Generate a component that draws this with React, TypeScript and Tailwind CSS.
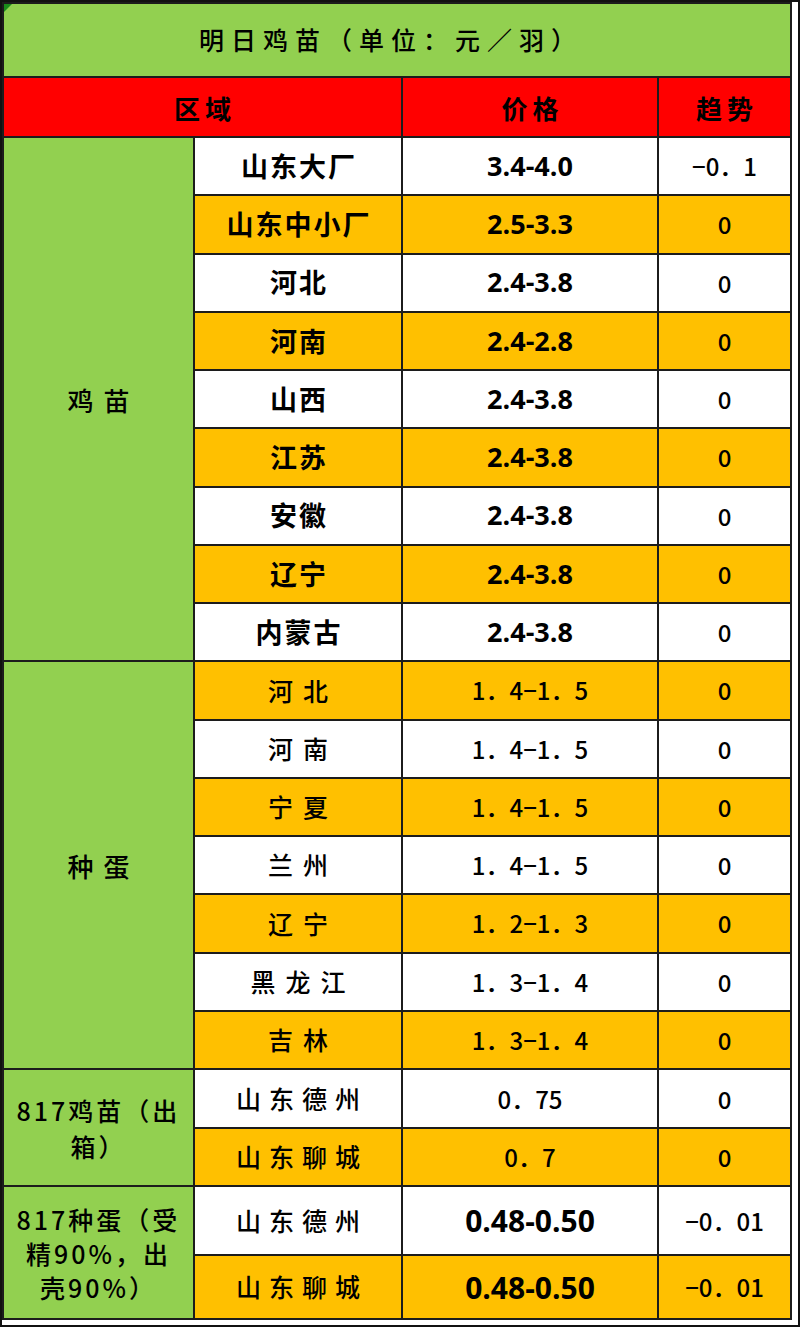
import { Fragment } from "react"

const cjk = "font-['Noto_Sans_CJK_SC',sans-serif] font-medium"
const latinBold = "font-['Open_Sans','Noto_Sans_CJK_SC',sans-serif] font-bold"

type Row = {
  name: string
  price: string
  trend: string
  alt: boolean
}

type Section = {
  label: React.ReactNode
  labelClass: string
  nameClass: string
  priceClass: string
  trendClass: string
  rows: Row[]
}

const sections: Section[] = [
  {
    label: "鸡苗",
    labelClass: "row-span-9 text-[26px] tracking-[10px] pl-[10px]",
    nameClass: "text-[27px] font-bold tracking-[2px] pl-[2px]",
    priceClass: `${latinBold} text-[27px]`,
    trendClass: "text-[24px]",
    rows: [
      { name: "山东大厂", price: "3.4-4.0", trend: "−0．1", alt: false },
      { name: "山东中小厂", price: "2.5-3.3", trend: "0", alt: true },
      { name: "河北", price: "2.4-3.8", trend: "0", alt: false },
      { name: "河南", price: "2.4-2.8", trend: "0", alt: true },
      { name: "山西", price: "2.4-3.8", trend: "0", alt: false },
      { name: "江苏", price: "2.4-3.8", trend: "0", alt: true },
      { name: "安徽", price: "2.4-3.8", trend: "0", alt: false },
      { name: "辽宁", price: "2.4-3.8", trend: "0", alt: true },
      { name: "内蒙古", price: "2.4-3.8", trend: "0", alt: false },
    ],
  },
  {
    label: "种蛋",
    labelClass: "row-span-7 text-[26px] tracking-[10px] pl-[10px]",
    nameClass: "text-[25px] tracking-[10px] pl-[10px]",
    priceClass: "text-[24px]",
    trendClass: "text-[24px]",
    rows: [
      { name: "河北", price: "1．4−1．5", trend: "0", alt: true },
      { name: "河南", price: "1．4−1．5", trend: "0", alt: false },
      { name: "宁夏", price: "1．4−1．5", trend: "0", alt: true },
      { name: "兰州", price: "1．4−1．5", trend: "0", alt: false },
      { name: "辽宁", price: "1．2−1．3", trend: "0", alt: true },
      { name: "黑龙江", price: "1．3−1．4", trend: "0", alt: false },
      { name: "吉林", price: "1．3−1．4", trend: "0", alt: true },
    ],
  },
  {
    label: (
      <>
        817鸡苗（出
        <br />
        箱）
      </>
    ),
    labelClass: "row-span-2 text-[25px] tracking-[3px] leading-[36px]",
    nameClass: "text-[25px] tracking-[8px] pl-[8px]",
    priceClass: "text-[24px]",
    trendClass: "text-[24px]",
    rows: [
      { name: "山东德州", price: "0．75", trend: "0", alt: false },
      { name: "山东聊城", price: "0．7", trend: "0", alt: true },
    ],
  },
  {
    label: (
      <>
        817种蛋（受
        <br />
        精90%，出
        <br />
        壳90%）
      </>
    ),
    labelClass: "row-span-2 text-[25px] tracking-[3px] leading-[34px]",
    nameClass: "text-[25px] tracking-[8px] pl-[8px]",
    priceClass: `${latinBold} text-[30px]`,
    trendClass: "text-[24px]",
    rows: [
      { name: "山东德州", price: "0.48-0.50", trend: "−0．01", alt: false },
      { name: "山东聊城", price: "0.48-0.50", trend: "−0．01", alt: true },
    ],
  },
]

function Cell({ className, children }: { className: string; children: React.ReactNode }) {
  return <div className={`flex items-center justify-center text-center text-black ${className}`}>{children}</div>
}

function SectionRows({ section }: { section: Section }) {
  return (
    <>
      {section.rows.map((r, i) => {
        const bg = r.alt ? "bg-[#ffc000]" : "bg-white"
        return (
          <Fragment key={i}>
            {i === 0 && <Cell className={`bg-[#92d050] ${section.labelClass}`}>{section.label}</Cell>}
            <Cell className={`${bg} ${section.nameClass}`}>{r.name}</Cell>
            <Cell className={`${bg} ${section.priceClass}`}>{r.price}</Cell>
            <Cell className={`${bg} ${section.trendClass}`}>{r.trend}</Cell>
          </Fragment>
        )
      })}
    </>
  )
}

export default function App() {
  return (
    <div className={`w-[800px] h-[1327px] bg-[#111] p-[2px] ${cjk}`}>
      <div className="w-full h-full bg-white pr-[6px] pb-[5px]">
        <div className="relative grid grid-cols-[189px_206px_254px_131px] grid-rows-[72px_58px_repeat(16,56.25px)_57px_56px_67px_62px] gap-[2px] bg-[#1c1c1c] p-[2px] w-[790px] h-[1318px]">
          <div className="absolute left-[2px] top-[2px] w-0 h-0 border-t-[8px] border-r-[8px] border-t-[#1a8a1a] border-r-transparent" />

          <Cell className="col-span-4 bg-[#92d050] text-[25px] tracking-[7px] pr-[12px]">明日鸡苗（单位：元／羽）</Cell>

          <Cell className="col-span-2 bg-[#ff0000] text-[26px] font-bold tracking-[5px] pl-[5px]">区域</Cell>
          <Cell className="bg-[#ff0000] text-[26px] font-bold tracking-[5px] pl-[5px]">价格</Cell>
          <Cell className="bg-[#ff0000] text-[26px] font-bold tracking-[5px] pl-[5px]">趋势</Cell>

          {sections.map((s, si) => (
            <SectionRows key={si} section={s} />
          ))}
        </div>
      </div>
    </div>
  )
}
